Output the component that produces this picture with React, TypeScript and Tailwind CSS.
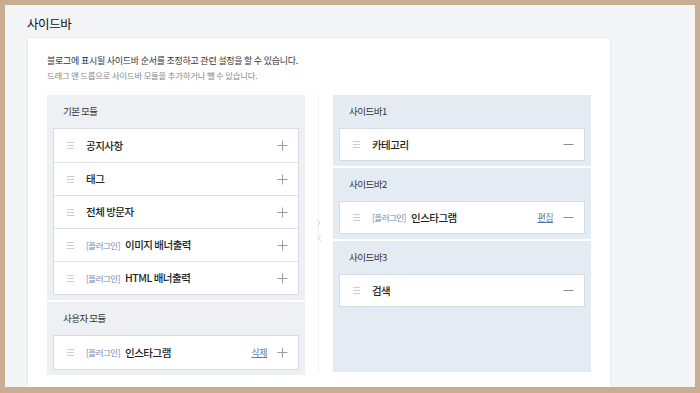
import { Fragment } from "react"

const font = { fontFamily: '"Noto Sans CJK KR", "Noto Sans", sans-serif' }

type Item = { name: string; plugin?: boolean; link?: string }

function Handle() {
  return (
    <div className="flex flex-col gap-[2px] w-[7px] mr-[12px]">
      <span className="h-px bg-[#c9ced5]" />
      <span className="h-px bg-[#c9ced5]" />
      <span className="h-px bg-[#c9ced5]" />
    </div>
  )
}

function Plus() {
  return (
    <svg width="11" height="11" viewBox="0 0 11 11" className="text-[#9a9ea4]">
      <path d="M5.5 0.5v10M0.5 5.5h10" stroke="currentColor" strokeWidth="1" fill="none" />
    </svg>
  )
}

function Minus() {
  return (
    <svg width="11" height="11" viewBox="0 0 11 11" className="text-[#8b8f95]">
      <path d="M0.5 5.5h10" stroke="currentColor" strokeWidth="1" fill="none" />
    </svg>
  )
}

function Row({ item, first, add, short }: { item: Item; first?: boolean; add?: boolean; short?: boolean }) {
  return (
    <div
      className={`flex items-center ${short ? "h-[31px]" : "h-[33px]"} pl-[13px] pr-[10px] bg-white ${first ? "" : "border-t border-[#dfe3e8]"}`}
    >
      <Handle />
      {item.plugin && (
        <span className="text-[8.5px] text-[#7088b0] mr-[5px] tracking-[-0.5px]">[플러그인]</span>
      )}
      <span className="text-[10.5px] text-[#222] font-medium tracking-[-0.5px]">{item.name}</span>
      <div className="flex-1" />
      {item.link && (
        <span className="text-[9px] text-[#5b79ab] underline mr-[10px] tracking-[-0.5px]">{item.link}</span>
      )}
      {add ? <Plus /> : <Minus />}
    </div>
  )
}

function Section({
  title,
  items,
  add,
  grow,
  bg,
}: {
  title: string
  items: Item[]
  add?: boolean
  grow?: boolean
  bg: string
}) {
  const short = !add
  return (
    <div className={`${bg} px-[6px] pb-[5px] ${grow ? "flex-1" : ""}`}>
      <div className={`${short ? "h-[33px]" : "h-[33px]"} flex items-center pl-[10px] text-[9.5px] text-[#333] tracking-[-0.5px]`}>
        {title}
      </div>
      <div className="border border-[#d6dce3]">
        {items.map((it, i) => (
          <Fragment key={it.name}>
            <Row item={it} first={i === 0} add={add} short={short} />
          </Fragment>
        ))}
      </div>
    </div>
  )
}

export default function App() {
  const basic: Item[] = [
    { name: "공지사항" },
    { name: "태그" },
    { name: "전체 방문자" },
    { name: "이미지 배너출력", plugin: true },
    { name: "HTML 배너출력", plugin: true },
  ]
  const custom: Item[] = [{ name: "인스타그램", plugin: true, link: "삭제" }]

  return (
    <div style={font} className="w-[700px] h-[393px] bg-[#c8ad93] pt-[5px] px-[5px] pb-[6px]">
      <div className="h-full bg-[#f2f4f6] pl-[22px] pr-[84px] flex flex-col overflow-hidden">
        <div className="h-[32px] pt-[10px] text-[12.5px] text-[#111] tracking-[-0.4px] leading-[18px]">사이드바</div>
        <div className="flex-1 bg-white border-t border-l border-r border-[#e8ebee] pl-[19px] pr-[19px] pt-[16px]">
          <p className="text-[9px] leading-[13px] text-[#333] tracking-[-0.25px]">
            블로그에 표시될 사이드바 순서를 조정하고 관련 설정을 할 수 있습니다.
          </p>
          <p className="mt-[2px] text-[8.3px] leading-[13px] text-[#888] tracking-[-0.15px]">
            드래그 앤 드롭으로 사이드바 모듈을 추가하거나 뺄 수 있습니다.
          </p>
          <div className="flex mt-[13px] h-[277px]">
            {/* available modules */}
            <div className="w-[259px] flex flex-col gap-[2px]">
              <Section title="기본 모듈" items={basic} add bg="bg-[#eef0f3]" />
              <Section title="사용자 모듈" items={custom} add bg="bg-[#eef0f3]" />
            </div>

            {/* divider */}
            <div className="w-[28px] flex justify-center">
              <div className="relative w-px h-full bg-[#f0f2f4]">
                <svg width="6" height="24" viewBox="0 0 6 24" className="absolute left-[-2px] top-[124px] text-[#d3d8de]">
                  <path d="M1 1l3 3-3 3M5 16l-3 3 3 3" stroke="currentColor" strokeWidth="1" fill="none" />
                </svg>
              </div>
            </div>

            {/* sidebar slots */}
            <div className="w-[259px] flex flex-col gap-[2px]">
              <Section title="사이드바1" items={[{ name: "카테고리" }]} bg="bg-[#e5ebf2]" />
              <Section
                title="사이드바2"
                items={[{ name: "인스타그램", plugin: true, link: "편집" }]}
                bg="bg-[#e5ebf2]"
              />
              <Section title="사이드바3" items={[{ name: "검색" }]} grow bg="bg-[#e5ebf2]" />
            </div>
          </div>
        </div>
      </div>
    </div>
  )
}
